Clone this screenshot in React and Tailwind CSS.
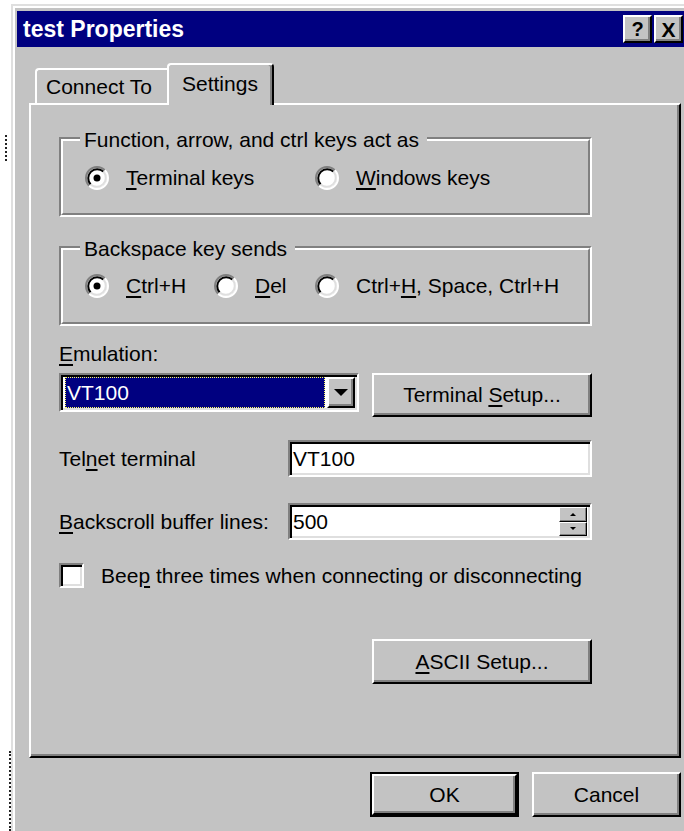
import React from "react";

// classic 3D bevels
const RAISED =
  "border-2 border-t-white border-l-white border-r-black border-b-black shadow-[inset_-2px_-2px_0_#808080]";
const SUNKEN =
  "border-2 border-t-[#808080] border-l-[#808080] border-r-white border-b-white shadow-[inset_2px_2px_0_#000,inset_-2px_-2px_0_#dfdfdf]";

// underlined accelerator letter
const Key = ({ children }) => (
  <u className="underline decoration-[1.5px] underline-offset-[3px]">{children}</u>
);

const Radio = ({ checked }) => (
  <svg width="24" height="24" viewBox="0 0 24 24" className="shrink-0">
    <circle cx="12" cy="12" r="10" fill="white" />
    <path d="M4.22 19.78 A11 11 0 0 1 19.78 4.22" fill="none" stroke="#808080" strokeWidth="2" />
    <path d="M19.78 4.22 A11 11 0 0 1 4.22 19.78" fill="none" stroke="#ffffff" strokeWidth="2" />
    <path d="M5.64 18.36 A9 9 0 0 1 18.36 5.64" fill="none" stroke="#000000" strokeWidth="2" />
    <path d="M18.36 5.64 A9 9 0 0 1 5.64 18.36" fill="none" stroke="#dfdfdf" strokeWidth="2" />
    {checked && <circle cx="12" cy="12" r="3.5" fill="black" />}
  </svg>
);

const RadioItem = ({ checked, className = "", children }) => (
  <div className={`flex items-center gap-[17px] ${className}`}>
    <Radio checked={checked} />
    <span>{children}</span>
  </div>
);

// etched frame with its caption sitting on the top line
const GroupBox = ({ label, className = "", children }) => (
  <div
    className={`w-[533px] h-[80px] border-2 border-t-[#808080] border-l-[#808080] border-r-white border-b-white ${className}`}>
    <div className="h-full flex flex-col border-2 border-t-white border-l-white border-r-[#808080] border-b-[#808080]">
      <div className="-mt-[13px] ml-[17px] self-start bg-[#c3c3c3] pl-[4px] pr-[8px]">{label}</div>
      {children}
    </div>
  </div>
);

const Button = ({ className = "", children }) => (
  <div className={`flex items-center justify-center bg-[#c3c3c3] ${RAISED} ${className}`}>
    {children}
  </div>
);

const Triangle = ({ up, w, h }) => (
  <svg width={w} height={h} viewBox={`0 0 ${w} ${h}`}>
    <polygon points={up ? `0,${h} ${w},${h} ${w / 2},0` : `0,0 ${w},0 ${w / 2},${h}`} fill="black" />
  </svg>
);

const SpinButton = ({ up }) => (
  <div className="flex-1 flex items-center justify-center bg-[#c3c3c3] border border-t-white border-l-white border-r-black border-b-black shadow-[inset_-1px_-1px_0_#808080]">
    <Triangle up={up} w={6} h={3} />
  </div>
);

function App() {
  return (
    <div className="w-[684px] h-[831px] overflow-hidden bg-white flex font-['Liberation_Sans',Arial,sans-serif] text-[21px] leading-[24px] text-black">
      {/* desktop edge */}
      <div className="w-[11px] shrink-0 flex flex-col items-end">
        <div className="mt-[135px] mr-[4px] h-[26px] border-r-2 border-dotted border-[#222]" />
        <div className="mt-auto h-[80px] border-r-2 border-dotted border-[#222]" />
      </div>

      {/* dialog window */}
      <div className="w-[684px] shrink-0 mt-[4px] bg-[#c3c3c3] border-t-2 border-l-2 border-[#dfdfdf] shadow-[inset_2px_2px_0_#fff] pt-[5px] pl-[4px]">
        {/* caption */}
        <div className="w-[670px] h-[36px] bg-[#000080] flex items-center justify-between pl-[6px] pr-[4px]">
          <span className="text-white font-bold text-[23px]">test Properties</span>
          <div className="flex gap-[2px]">
            <Button className="w-[29px] h-[28px] font-bold text-[20px] leading-none">?</Button>
            <Button className="w-[29px] h-[28px] font-bold text-[21px] leading-none">X</Button>
          </div>
        </div>

        {/* tabs */}
        <div className="mt-[16px] ml-[18px] h-[40px] flex items-end">
          <div className="h-[35px] w-[136px] flex items-center border-t-2 border-l-2 border-white rounded-tl-[4px] pl-[9px]">
            Connect To
          </div>
          <div className="relative z-10 -ml-[4px] -mb-[2px] h-[42px] w-[107px] flex items-center bg-[#c3c3c3] border-t-2 border-l-2 border-r-2 border-t-white border-l-white border-r-black rounded-t-[4px] shadow-[inset_-2px_0_0_#808080] pl-[13px] pb-[2px]">
            Settings
          </div>
        </div>

        {/* tab page */}
        <div className="ml-[12px] w-[652px] h-[655px] border-2 border-t-white border-l-white border-r-black border-b-black shadow-[inset_-2px_-2px_0_#808080] pl-[28px] pt-[32px] flex flex-col">
          <GroupBox label="Function, arrow, and ctrl keys act as">
            <div className="mt-[14px] pl-[22px] flex items-center">
              <RadioItem checked className="w-[230px]">
                <Key>T</Key>erminal keys
              </RadioItem>
              <RadioItem>
                <Key>W</Key>indows keys
              </RadioItem>
            </div>
          </GroupBox>

          <GroupBox label="Backspace key sends" className="mt-[29px]">
            <div className="mt-[13px] pl-[22px] flex items-center">
              <RadioItem checked className="w-[129px]">
                <Key>C</Key>trl+H
              </RadioItem>
              <RadioItem className="w-[101px]">
                <Key>D</Key>el
              </RadioItem>
              <RadioItem>
                Ctrl+<Key>H</Key>, Space, Ctrl+H
              </RadioItem>
            </div>
          </GroupBox>

          <div className="mt-[16px]">
            <Key>E</Key>mulation:
          </div>

          <div className="mt-[7px] flex items-start">
            <div className={`w-[300px] h-[39px] bg-white ${SUNKEN} flex pl-[4px] pr-[2px] py-[2px]`}>
              <div className="flex-1 mr-[2px] bg-[#000080] border border-dotted border-[#ffff60] text-white pl-[1px] flex items-center">
                VT100
              </div>
              <Button className="w-[28px]">
                <Triangle w={14} h={7} />
              </Button>
            </div>
            <Button className="ml-[13px] w-[220px] h-[44px]">
              <span>
                Terminal <Key>S</Key>etup...
              </span>
            </Button>
          </div>

          <div className="mt-[23px] flex items-center">
            <div className="w-[229px]">
              Tel<Key>n</Key>et terminal
            </div>
            <div className={`w-[304px] h-[37px] bg-white ${SUNKEN} flex items-center pl-[3px]`}>VT100</div>
          </div>

          <div className="mt-[26px] flex items-center">
            <div className="w-[229px]">
              <Key>B</Key>ackscroll buffer lines:
            </div>
            <div className={`w-[304px] h-[37px] bg-white ${SUNKEN} flex items-center pl-[3px] pr-[3px] py-[2px]`}>
              <span className="flex-1">500</span>
              <div className="w-[28px] h-full flex flex-col">
                <SpinButton up />
                <SpinButton />
              </div>
            </div>
          </div>

          <div className="mt-[23px] flex items-center gap-[17px]">
            <div className={`w-[25px] h-[25px] bg-white ${SUNKEN}`} />
            <span>
              Bee<Key>p</Key> three times when connecting or disconnecting
            </span>
          </div>

          <Button className="mt-[51px] ml-[313px] w-[220px] h-[45px]">
            <span>
              <Key>A</Key>SCII Setup...
            </span>
          </Button>
        </div>

        {/* dialog buttons */}
        <div className="mt-[14px] pl-[353px] flex gap-[13px]">
          <div className="w-[149px] h-[45px] border-2 border-black">
            <Button className="h-full">OK</Button>
          </div>
          <Button className="w-[149px] h-[45px]">Cancel</Button>
        </div>
      </div>
    </div>
  );
}

export default App;
